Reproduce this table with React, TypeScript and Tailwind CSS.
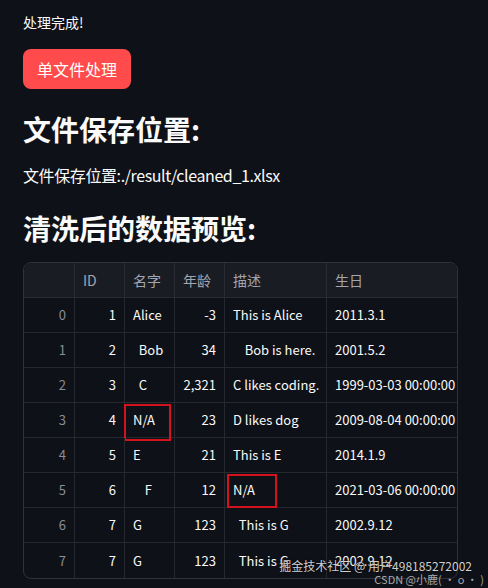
const cols = ["", "ID", "名字", "年龄", "描述", "生日"];

type Row = [string, string, string, string, string, string];

const rows: Row[] = [
  ["0", "1", "Alice", "-3", "This is Alice", "2011.3.1"],
  ["1", "2", "  Bob", "34", "    Bob is here.", "2001.5.2"],
  ["2", "3", "  C", "2,321", "C likes coding.", "1999-03-03 00:00:00"],
  ["3", "4", "N/A", "23", "D likes dog", "2009-08-04 00:00:00"],
  ["4", "5", "E", "21", "This is E", "2014.1.9"],
  ["5", "6", "    F", "12", "N/A", "2021-03-06 00:00:00"],
  ["6", "7", "G", "123", "  This is G", "2002.9.12"],
  ["7", "7", "G", "123", "  This is G", "2002.9.12"],
];

// columns right-aligned like numbers in the grid
const rightCols = [0, 1, 3];

function Cell({
  value,
  col,
  row,
}: {
  value: string;
  col: number;
  row: number;
}) {
  const last = col === 5;
  const lastRow = row === rows.length - 1;
  return (
    <div
      className={[
        "relative flex h-[35px] items-center whitespace-pre px-[8px] text-[13px]",
        rightCols.includes(col) ? "justify-end" : "justify-start",
        col === 0 ? "text-[#8a8c96]" : "text-[#fafafa]",
        last ? "" : "border-r border-[#262830]",
        lastRow ? "" : "border-b border-[#262830]",
      ].join(" ")}
    >
      {value}
      {row === 3 && col === 2 && (
        <div className="absolute left-[-1px] top-[1px] h-[37px] w-[47px] border-2 border-[#d4121b]" />
      )}
      {row === 5 && col === 4 && (
        <div className="absolute left-[2px] top-[1px] h-[34px] w-[50px] border-2 border-[#d4121b]" />
      )}
    </div>
  );
}

export default function App() {
  return (
    <div
      className="relative flex min-h-[588px] w-full flex-col items-start bg-[#0e1117] px-[23px] text-[#fafafa]"
      style={{ fontFamily: '"Noto Sans CJK SC", "Noto Sans", sans-serif' }}
    >
      <div className="pt-[12px] text-[14px] leading-[20px]">处理完成!</div>

      <button className="mt-[17px] h-[40px] rounded-[8px] bg-[#ff4b4b] px-[14px] text-[16px] text-white">
        单文件处理
      </button>

      <h2 className="mt-[22px] text-[28px] font-bold leading-[36px]">文件保存位置:</h2>

      <p className="mt-[16px] text-[16px] leading-[24px] tracking-[-0.4px]">文件保存位置:./result/cleaned_1.xlsx</p>

      <h2 className="mt-[23px] text-[28px] font-bold leading-[36px]">清洗后的数据预览:</h2>

      <div className="mt-[16px] grid w-[435px] grid-cols-[51px_50px_50px_50px_102px_132px] overflow-hidden rounded-[8px] border border-[#30323b]">
        {cols.map((c, i) => (
          <div
            key={c + i}
            className={[
              "flex h-[35px] items-center bg-[#1a1c24] px-[8px] text-[14px] text-[#a3a6b0]",
              "border-b border-[#2a2c34]",
              i === 5 ? "" : "border-r",
            ].join(" ")}
          >
            {c}
          </div>
        ))}
        {rows.map((r, ri) =>
          r.map((v, ci) => <Cell key={ri + "-" + ci} value={v} col={ci} row={ri} />)
        )}
      </div>

      {/* watermarks */}
      <div className="absolute bottom-[14px] right-[16px] text-[12px] leading-[16px] text-[#d0d0d0] [text-shadow:0_0_2px_#000]">
        掘金技术社区 @ 用户498185272002
      </div>
      <div className="absolute bottom-[2px] right-[4px] text-[11px] leading-[14px] text-[#a8a8a8]">
        CSDN @小鹿( ・ o ・ )
      </div>
    </div>
  );
}
